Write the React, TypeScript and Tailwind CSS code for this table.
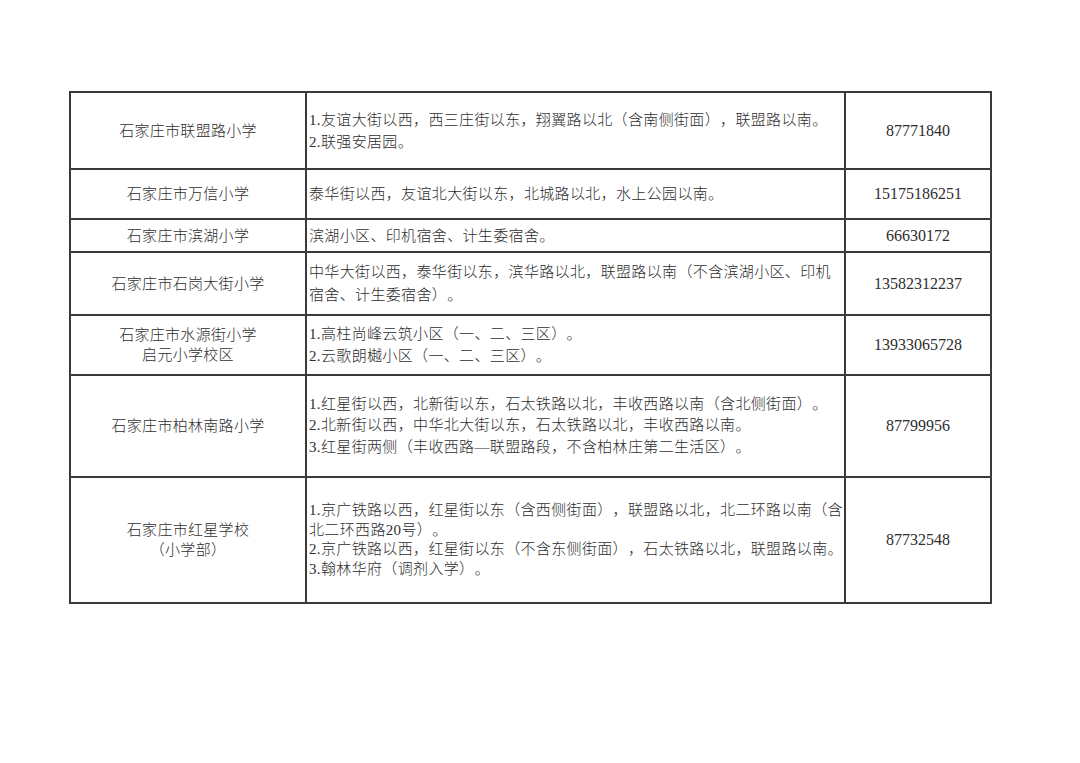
import React from 'react';

type Row = {
  h: string;
  school: string[];
  area: string[];
  lead: string;
  phone: string;
};

const rows: Row[] = [
  {
    h: 'h-[77px]',
    school: ['石家庄市联盟路小学'],
    area: ['1.友谊大街以西，西三庄街以东，翔翼路以北（含南侧街面），联盟路以南。', '2.联强安居园。'],
    lead: 'leading-[22px]',
    phone: '87771840',
  },
  {
    h: 'h-[50px]',
    school: ['石家庄市万信小学'],
    area: ['泰华街以西，友谊北大街以东，北城路以北，水上公园以南。'],
    lead: 'leading-[22px]',
    phone: '15175186251',
  },
  {
    h: 'h-[33px]',
    school: ['石家庄市滨湖小学'],
    area: ['滨湖小区、印机宿舍、计生委宿舍。'],
    lead: 'leading-[22px]',
    phone: '66630172',
  },
  {
    h: 'h-[63px]',
    school: ['石家庄市石岗大街小学'],
    area: ['中华大街以西，泰华街以东，滨华路以北，联盟路以南（不含滨湖小区、印机', '宿舍、计生委宿舍）。'],
    lead: 'leading-[23px]',
    phone: '13582312237',
  },
  {
    h: 'h-[60px]',
    school: ['石家庄市水源街小学', '启元小学校区'],
    area: ['1.高柱尚峰云筑小区（一、二、三区）。', '2.云歌朗樾小区（一、二、三区）。'],
    lead: 'leading-[22px]',
    phone: '13933065728',
  },
  {
    h: 'h-[102px]',
    school: ['石家庄市柏林南路小学'],
    area: [
      '1.红星街以西，北新街以东，石太铁路以北，丰收西路以南（含北侧街面）。',
      '2.北新街以西，中华北大街以东，石太铁路以北，丰收西路以南。',
      '3.红星街两侧（丰收西路—联盟路段，不含柏林庄第二生活区）。',
    ],
    lead: 'leading-[21.5px]',
    phone: '87799956',
  },
  {
    h: 'h-[126px]',
    school: ['石家庄市红星学校', '（小学部）'],
    area: [
      '1.京广铁路以西，红星街以东（含西侧街面），联盟路以北，北二环路以南（含',
      '北二环西路20号）。',
      '2.京广铁路以西，红星街以东（不含东侧街面），石太铁路以北，联盟路以南。',
      '3.翰林华府（调剂入学）。',
    ],
    lead: 'leading-[19.5px]',
    phone: '87732548',
  },
];

export default function App() {
  return (
    <div
      className="min-h-[763px] w-[1080px] bg-white pl-[69px] pt-[91px] text-[#2e2e2e]"
      style={{ fontFamily: '"Liberation Serif", "Noto Sans CJK SC", serif' }}
    >
      <div className="grid w-[923px] grid-cols-[236px_539px_146px] border-l-2 border-t-2 border-[#3a3a3a] text-[15px] font-light [text-spacing-trim:space-all]">
        {rows.map((r, i) => (
          <React.Fragment key={i}>
            <div className={`${r.h} flex flex-col items-center justify-center border-b-2 border-r-2 border-[#3a3a3a] leading-[20px] tracking-[0.3px]`}>
              {r.school.map((s) => (
                <div key={s} className="whitespace-nowrap">{s}</div>
              ))}
            </div>
            <div className={`${r.h} flex flex-col justify-center border-b-2 border-r-2 border-[#3a3a3a] pl-[2px] tracking-[0.35px] ${r.lead}`}>
              {r.area.map((s) => (
                <div key={s} className="whitespace-nowrap">{s}</div>
              ))}
            </div>
            <div className={`${r.h} flex items-center justify-center border-b-2 border-r-2 border-[#3a3a3a] text-[16px]`}>
              {r.phone}
            </div>
          </React.Fragment>
        ))}
      </div>
    </div>
  );
}
